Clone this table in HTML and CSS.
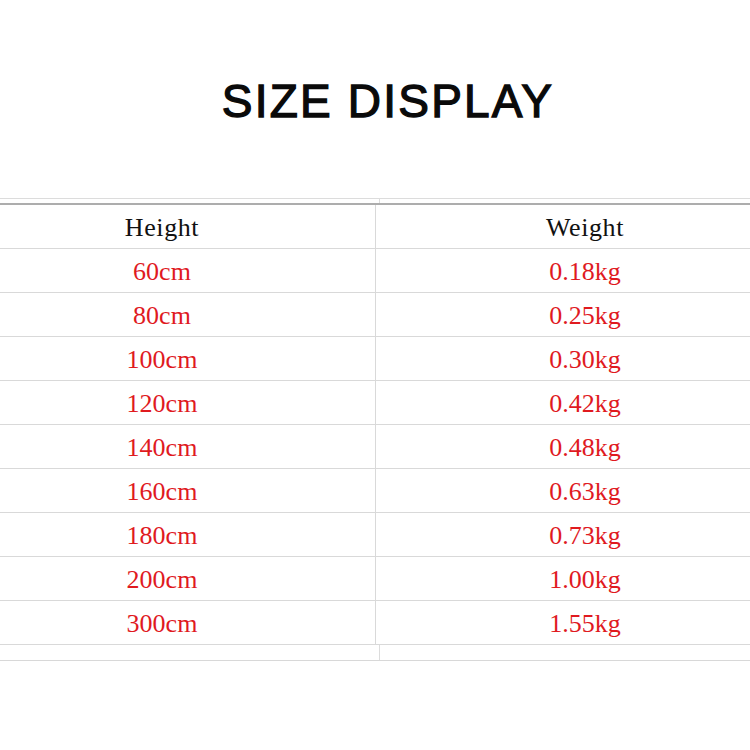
FILE: index.html
```html
<!DOCTYPE html>
<html lang="en">
<head>
<meta charset="utf-8">
<title>Size Display</title>
<link rel="stylesheet" href="styles.css">
</head>
<body>
<div class="page">
  <h1 class="title">SIZE DISPLAY</h1>
  <div class="sheet">
    <div class="strip strip-top"><span class="stub"></span></div>
    <div class="grid">
      <div class="row head"><div class="cell left">Height</div><div class="cell right">Weight</div></div>
      <div class="row"><div class="cell left">60cm</div><div class="cell right">0.18kg</div></div>
      <div class="row"><div class="cell left">80cm</div><div class="cell right">0.25kg</div></div>
      <div class="row"><div class="cell left">100cm</div><div class="cell right">0.30kg</div></div>
      <div class="row"><div class="cell left">120cm</div><div class="cell right">0.42kg</div></div>
      <div class="row"><div class="cell left">140cm</div><div class="cell right">0.48kg</div></div>
      <div class="row"><div class="cell left">160cm</div><div class="cell right">0.63kg</div></div>
      <div class="row"><div class="cell left">180cm</div><div class="cell right">0.73kg</div></div>
      <div class="row"><div class="cell left">200cm</div><div class="cell right">1.00kg</div></div>
      <div class="row"><div class="cell left">300cm</div><div class="cell right">1.55kg</div></div>
    </div>
    <div class="strip strip-bottom"><span class="stub"></span></div>
  </div>
</div>
</body>
</html>
```
FILE: styles.css
```css
html, body {
  margin: 0;
  padding: 0;
  background: #ffffff;
}
body {
  width: 750px;
  height: 750px;
  overflow: hidden;
}
.page {
  width: 750px;
}
.title {
  margin: 0;
  padding-top: 78px;
  padding-left: 26px;
  height: 198px;
  box-sizing: border-box;
  text-align: center;
  font-family: "Liberation Sans", Arial, sans-serif;
  font-weight: 400;
  font-size: 46px;
  line-height: 46px;
  letter-spacing: 2.2px;
  -webkit-text-stroke: 1.3px #0a0a0a;
  color: #0a0a0a;
}
.sheet {
  width: 750px;
}
.strip {
  display: flex;
  box-sizing: border-box;
}
.strip-top {
  border-top: 1px solid #dcdcdc;
  height: 5px;
}
.strip-bottom {
  height: 16px;
  border-bottom: 1px solid #d8d8d8;
}
.stub {
  margin-left: 379px;
  width: 1px;
  background: #dcdcdc;
}
.grid {
  border-top: 2px solid #adadad;
  display: flex;
  flex-direction: column;
}
.row {
  display: flex;
  height: 44px;
  box-sizing: border-box;
  border-bottom: 1px solid #d9d9d9;
}
.cell {
  display: flex;
  align-items: center;
  justify-content: center;
  padding-top: 2px;
  font-family: "Liberation Serif", "Times New Roman", serif;
  font-size: 26px;
  color: #e01a1f;
  box-sizing: border-box;
}
.head .cell {
  color: #111111;
  letter-spacing: 0.6px;
}
.left {
  width: 376px;
  padding-right: 51px;
  border-right: 1px solid #d9d9d9;
}
.right {
  flex: 1;
  padding-left: 44px;
}
```
